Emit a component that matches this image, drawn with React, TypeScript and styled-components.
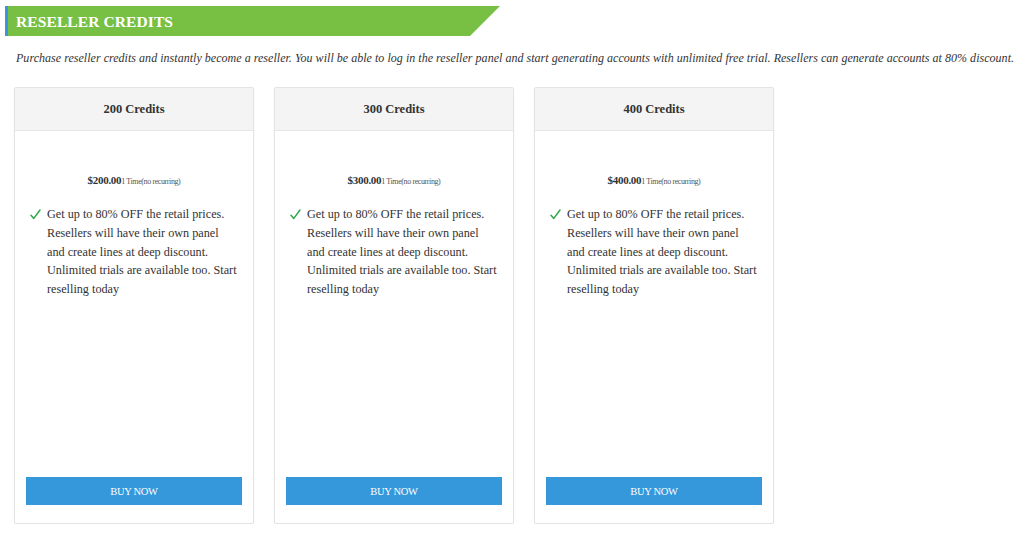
import React from 'react';
import styled, { createGlobalStyle } from 'styled-components';

const GlobalStyle = createGlobalStyle`
    body {
        margin: 0;
        background: #fff;
        font-family: 'Liberation Serif', 'Times New Roman', serif;
        color: #333;
    }
`;

const Page = styled.div`
    padding: 6px 0 0 5px;
`;

const Banner = styled.div`
    width: 495px;
    height: 30px;
    background: #77c043;
    border-left: 3px solid #3a97dd;
    box-sizing: border-box;
    clip-path: polygon(0 0, 100% 0, calc(100% - 30px) 100%, 0 100%);
    display: flex;
    align-items: center;
    padding: 2px 0 0 8px;
`;

const BannerTitle = styled.h2`
    margin: 0;
    color: #fff;
    font-size: 15.5px;
    font-weight: bold;
    letter-spacing: 0.1px;
`;

const Intro = styled.p`
    margin: 15px 0 0 11px;
    font-size: 12px;
    font-style: italic;
    color: #333;
    white-space: nowrap;
    letter-spacing: 0.03px;
`;

const CardRow = styled.div`
    display: flex;
    gap: 20px;
    margin: 21px 0 0 9px;
`;

const Card = styled.div`
    width: 240px;
    height: 437px;
    box-sizing: border-box;
    border: 1px solid #e3e3e3;
    border-radius: 2px;
    box-shadow: 0 1px 2px rgba(0, 0, 0, 0.06);
    display: flex;
    flex-direction: column;
    background: #fff;
`;

const CardHead = styled.div`
    height: 42px;
    background: #f4f4f4;
    border-bottom: 1px solid #e6e6e6;
    display: flex;
    align-items: center;
    justify-content: center;
    font-size: 12.5px;
    font-weight: bold;
    color: #333;
`;

const CardBody = styled.div`
    flex: 1;
    display: flex;
    flex-direction: column;
    padding: 43px 11px 18px 11px;
`;

const Price = styled.div`
    text-align: center;
    font-size: 11px;
    font-weight: bold;
    color: #333;
    letter-spacing: -0.3px;

    span {
        font-size: 8px;
        font-weight: normal;
        color: #555;
        letter-spacing: -0.4px;
    }
`;

const Features = styled.ul`
    list-style: none;
    margin: 19px 0 0 0;
    padding: 0;
    flex: 1;
`;

const Feature = styled.li`
    display: flex;
    gap: 6px;
    font-size: 12.2px;
    line-height: 18.8px;
    color: #333;
`;

const FeatureText = styled.span`
    width: 191px;
`;

const Check = styled.svg`
    width: 11px;
    height: 11px;
    flex-shrink: 0;
    margin: 4px 0 0 4px;
`;

const BuyButton = styled.button`
    height: 28px;
    width: 100%;
    border: none;
    background: #3498db;
    color: #fff;
    font-family: 'Liberation Serif', 'Times New Roman', serif;
    font-size: 10.5px;
    letter-spacing: -0.3px;
    cursor: pointer;
`;

const plans = [
    { credits: 200, price: '$200.00' },
    { credits: 300, price: '$300.00' },
    { credits: 400, price: '$400.00' },
];

const App: React.FC = () => {
    return (
        <Page>
            <GlobalStyle />
            <Banner>
                <BannerTitle>RESELLER CREDITS</BannerTitle>
            </Banner>
            <Intro>
                Purchase reseller credits and instantly become a reseller. You will be able to log in the
                reseller panel and start generating accounts with unlimited free trial. Resellers can
                generate accounts at 80% discount.
            </Intro>
            <CardRow>
                {plans.map((p) => (
                    <Card key={p.credits}>
                        <CardHead>{p.credits} Credits</CardHead>
                        <CardBody>
                            <Price>
                                {p.price}
                                <span>1 Time(no recurring)</span>
                            </Price>
                            <Features>
                                <Feature>
                                    <Check viewBox="0 0 11 11">
                                        <path
                                            d="M1 6.2 L3.8 9.4 L10 1"
                                            fill="none"
                                            stroke="#2fa84a"
                                            strokeWidth="1.5"
                                            strokeLinecap="round"
                                            strokeLinejoin="round"
                                        />
                                    </Check>
                                    <FeatureText>
                                        Get up to 80% OFF the retail prices. Resellers will have their own
                                        panel and create lines at deep discount. Unlimited trials are
                                        available too. Start reselling today
                                    </FeatureText>
                                </Feature>
                            </Features>
                            <BuyButton>BUY NOW</BuyButton>
                        </CardBody>
                    </Card>
                ))}
            </CardRow>
        </Page>
    );
};

export default App;
